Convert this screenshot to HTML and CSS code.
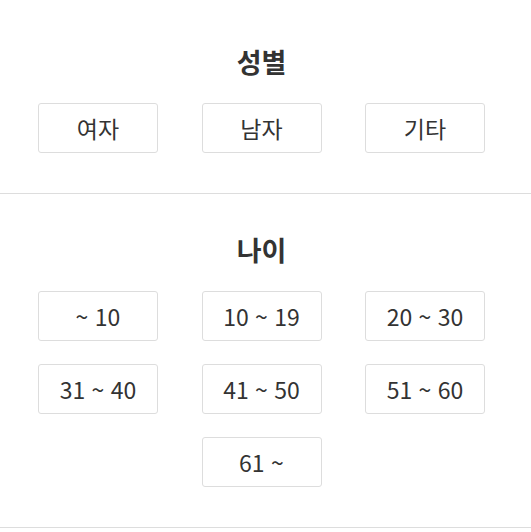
FILE: index.html
```html
<!DOCTYPE html>
<html lang="ko">
<head>
  <meta charset="UTF-8">
  <meta name="viewport" content="width=device-width, initial-scale=1.0">
  <title>성별 / 나이</title>
  <link rel="stylesheet" href="styles.css">
</head>
<body>
  <div class="filter first">
    <h2 class="filter-title">성별</h2>
    <div class="options">
      <button class="option">여자</button>
      <button class="option">남자</button>
      <button class="option">기타</button>
    </div>
  </div>

  <div class="filter">
    <h2 class="filter-title">나이</h2>
    <div class="options">
      <button class="option">~ 10</button>
      <button class="option">10 ~ 19</button>
      <button class="option">20 ~ 30</button>
      <button class="option">31 ~ 40</button>
      <button class="option">41 ~ 50</button>
      <button class="option">51 ~ 60</button>
      <button class="option center">61 ~</button>
    </div>
  </div>
</body>
</html>
```

FILE: styles.css
```css
body {
  margin: 0;
  background-color: #fff;
  font-family: "Noto Sans CJK KR", "Noto Sans", sans-serif;
  color: #333;
}
.filter {
  padding: 38px 8px 40px 0;
  border-bottom: 1px solid #ddd;
}
.filter.first {
  padding-top: 44px;
}
.filter-title {
  margin: 0 0 23px;
  font-size: 27px;
  line-height: 36px;
  font-weight: 700;
  text-align: center;
  color: #333;
}
.options {
  display: grid;
  grid-template-columns: repeat(3, 120px);
  column-gap: 43.5px;
  row-gap: 23px;
  justify-content: center;
}
.option {
  height: 50px;
  padding: 0;
  background-color: #fff;
  border: 1px solid #ddd;
  border-radius: 3px;
  font-family: inherit;
  font-size: 23px;
  color: #333;
  cursor: pointer;
}
.option.center {
  grid-column: 2;
}
```
